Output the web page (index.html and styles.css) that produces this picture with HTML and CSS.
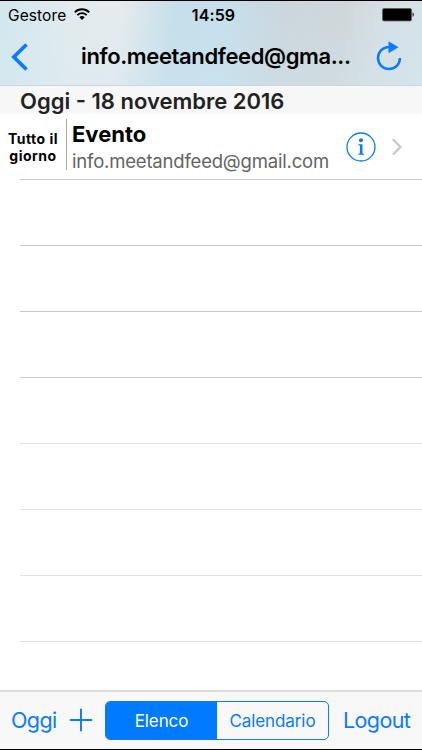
FILE: index.html
```html
<!DOCTYPE html>
<html lang="it">
<head>
<meta charset="utf-8">
<title>Elenco eventi</title>
<link rel="stylesheet" href="styles.css">
</head>
<body>
<div class="app">
  <header class="header">
    <div class="status">
      <div class="carrier"><span>Gestore</span>
        <svg class="wifi" width="16" height="12" viewBox="0 0 16 12" fill="none" stroke="#000" stroke-width="1.9"><path d="M.8 4.3a10.2 10.2 0 0 1 14.4 0M3.3 7.1a6.7 6.7 0 0 1 9.4 0"/><path d="M5.3 9.2a3.9 3.9 0 0 1 5.4 0L8 12z" fill="#000" stroke="none"/></svg>
      </div>
      <time class="clock">14:59</time>
      <svg class="battery" width="33" height="14" viewBox="0 0 33 14"><rect x=".5" y=".5" width="29" height="12.4" rx="1.5" fill="#000" stroke="#555b60" stroke-width=".8"/><path d="M30.6 4.6c1.5.5 1.5 3.7 0 4.2z"/></svg>
    </div>
    <nav class="navbar">
      <svg class="back" width="18" height="28" viewBox="0 0 18 28" fill="none" stroke="#0a7aff" stroke-width="3.7"><path d="M16.5 1.5 3.8 14l12.7 12.5"/></svg>
      <h1>info.meetandfeed@gma...</h1>
      <svg class="reload" width="26" height="30" viewBox="0 0 26 30" fill="none" stroke="#0a7aff" stroke-width="2.5"><path d="M13 6A11 11 0 1 0 24 17"/><path d="M12.5.3v12l10-6z" fill="#0a7aff" stroke="none"/></svg>
    </nav>
  </header>
  <h2 class="section">Oggi - 18 novembre 2016</h2>
  <main class="list">
    <div class="row event">
      <div class="when">Tutto il<br>giorno</div>
      <div class="details"><strong>Evento</strong><span>info.meetandfeed@gmail.com</span></div>
      <svg class="info" width="30" height="30" viewBox="0 0 30 30"><circle cx="15" cy="15" r="14" fill="none" stroke="#0a7aff" stroke-width="1.3"/><circle cx="15" cy="8.2" r="2" fill="#0a7aff"/><path d="M12.2 12.3h4.3v9.1l1.6.4v.9h-5.9v-.9l1.7-.4v-7.8l-1.7-.4z" fill="#0a7aff"/></svg>
      <svg class="more" width="12" height="18" viewBox="0 0 12 18" fill="none" stroke="#c7c7cc" stroke-width="2.2"><path d="m1.8 1.2 7.7 7.8-7.7 7.8"/></svg>
    </div>
    <div class="row"></div><div class="row"></div><div class="row"></div>
    <div class="row light"></div><div class="row light"></div><div class="row light"></div><div class="row light"></div>
  </main>
  <footer class="toolbar">
    <a class="today">Oggi</a>
    <svg class="plus" width="24" height="24" viewBox="0 0 24 24" stroke="#0a7aff" stroke-width="1.9"><path d="M.8 12h22.4M12 .8v22.4"/></svg>
    <div class="segments"><span class="selected"><b>Elenco</b></span><span><b>Calendario</b></span></div>
    <a class="logout">Logout</a>
  </footer>
</div>
</body>
</html>
```
FILE: styles.css
```css
* { box-sizing: border-box; }
body { margin: 0; font-family: Inter, "Liberation Sans", sans-serif; color: #000; background: #fff; }
svg { display: block; flex: none; }
.app { width: 422px; height: 750px; display: flex; flex-direction: column; overflow: hidden; border-top: 1px solid #000; border-bottom: 1px solid #000; white-space: nowrap; }
.header { height: 85px; flex: none; background: linear-gradient(to bottom, rgba(221,239,245,0), rgba(210,233,242,.3)), linear-gradient(96deg, #d2e7ee 0, #e2ebee 17%, #e6ebed 28%, #c5deea 41%, #c5dfeb 53%, #cbd6dc 66%, #cfd6d9 80%, #d5dfe3 89%, #d5e3e9 100%); border-bottom: 1px solid #c8d9e1; }
.status { height: 28px; display: grid; grid-template-columns: 1fr auto 1fr; align-items: center; padding: 0 7px 0 8px; }
.carrier { display: flex; align-items: center; gap: 9px; font-size: 15.5px; letter-spacing: .1px; }
.wifi { margin: -2px 0 0 -1px; }
.clock { font-size: 16px; font-weight: 600; letter-spacing: .1px; padding-left: 4px; }
.battery { justify-self: end; }
.navbar { height: 56px; display: flex; align-items: center; padding: 0 20px 0 10px; }
.navbar h1 { margin: -2px 0 0 53px; width: 295px; font-size: 22px; line-height: 28px; font-weight: 600; letter-spacing: -.37px; }
.reload { margin-top: -2px; }
.section { height: 28px; flex: none; margin: 0; padding-left: 20px; background: #f7f7f7; color: #222; font-size: 22px; line-height: 30px; font-weight: 600; }
.list { flex: 1; min-height: 0; }
.row { height: 65.95px; background: linear-gradient(#c8c7cc, #c8c7cc) 20px 100% / 402px 1px no-repeat; }
.row.light { background-image: linear-gradient(#e2e2e4, #e2e2e4); }
.event { display: flex; align-items: center; }
.when { width: 66px; font-size: 14px; line-height: 17px; font-weight: 700; text-align: center; letter-spacing: .5px; }
.details { height: 51px; margin-top: -5px; width: 280px; padding: 1px 0 0 5px; border-left: 1px solid #aaa; display: flex; flex-direction: column; }
.details strong { font-size: 22px; line-height: 29px; }
.details span { color: #646464; font-size: 18.5px; line-height: 25px; letter-spacing: -.19px; }
.more { margin-left: 15px; }
.toolbar { height: 59px; flex: none; display: flex; align-items: center; padding-left: 11px; border-top: 2px solid #dcdcdc; background: #f8f8f8; color: #0a7aff; }
.today, .logout { font-size: 21.5px; letter-spacing: -.6px; margin-top: -1px; }
.today { width: 58px; }
.plus { margin-top: -1px; }
.segments { width: 224px; height: 39px; margin: 0 14px 0 12px; display: grid; grid-template-columns: 1fr 1fr; border: 1.5px solid #0a7aff; border-radius: 5px; overflow: hidden; font-size: 17px; letter-spacing: -.1px; text-align: center; line-height: 38px; }
.segments b { font-weight: 400; }
.selected { background: #007aff; color: #fff; }
```
